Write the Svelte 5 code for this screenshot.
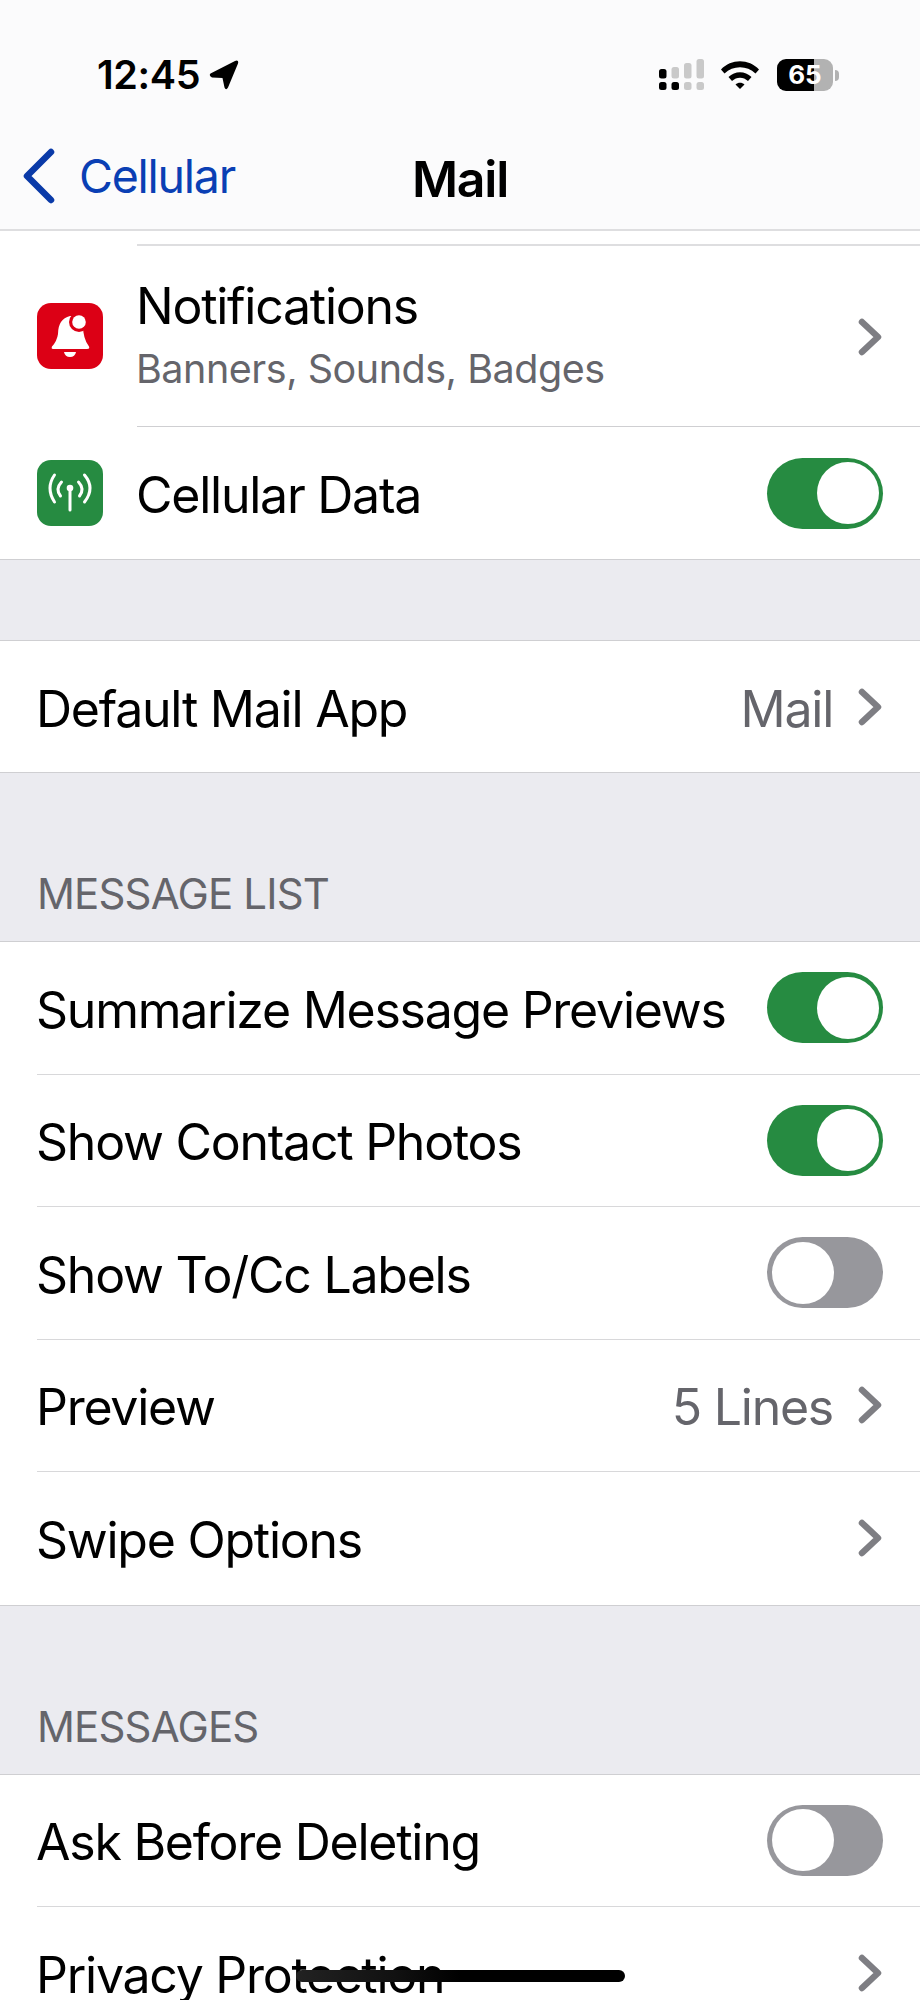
<script>
  const listRows = [
    { label: 'Summarize Message Previews', toggle: true },
    { label: 'Show Contact Photos', toggle: true },
    { label: 'Show To/Cc Labels', toggle: false },
    { label: 'Preview', value: '5 Lines' },
    { label: 'Swipe Options' }
  ];
  const messageRows = [
    { label: 'Ask Before Deleting', toggle: false },
    { label: 'Privacy Protection' }
  ];
</script>

{#snippet chevron()}
  <svg class="chevron" viewBox="0 0 24 38" aria-hidden="true">
    <path d="M4 4 L20 19 L4 34" fill="none" stroke="#7e7e83" stroke-width="6.5" stroke-linecap="round" stroke-linejoin="round" />
  </svg>
{/snippet}

{#snippet toggle(on)}
  <span class="toggle" class:on><span class="knob"></span></span>
{/snippet}

{#snippet row(item)}
  <div class="row">
    <span class="label">{item.label}</span>
    {#if item.value}<span class="value">{item.value}</span>{/if}
    {#if item.toggle !== undefined}
      {@render toggle(item.toggle)}
    {:else}
      {@render chevron()}
    {/if}
  </div>
{/snippet}

<div class="phone">
  <header>
    <div class="status">
      <div class="time">
        <span>12:45</span>
        <svg class="arrow" viewBox="0 0 30 30" aria-hidden="true">
          <path d="M1.500 13.500 L26 1 Q30 -0.500 29 3.500 L19 27.500 Q17 31 15.500 27.500 L13.500 18 L3 17.500 Q-0.500 15.500 1.500 13.500 Z" fill="#000" />
        </svg>
      </div>
      <div class="indicators">
        <svg class="signal" viewBox="0 0 46 32" aria-hidden="true">
          <rect x="0" y="10" width="7.500" height="9.500" rx="2.500" fill="#000" />
          <rect x="0" y="23" width="7.500" height="8" rx="2.500" fill="#000" />
          <rect x="12.500" y="8" width="7.500" height="11.500" rx="2.500" fill="#c9c9c9" />
          <rect x="12.500" y="23" width="7.500" height="8" rx="2.500" fill="#000" />
          <rect x="25" y="4" width="7.500" height="15.500" rx="2.500" fill="#c9c9c9" />
          <rect x="25" y="23" width="7.500" height="8" rx="2.500" fill="#c9c9c9" />
          <rect x="37.500" y="0" width="7.500" height="19.500" rx="2.500" fill="#c9c9c9" />
          <rect x="37.500" y="23" width="7.500" height="8" rx="2.500" fill="#c9c9c9" />
        </svg>
        <svg class="wifi" viewBox="0 0 38 28" aria-hidden="true">
          <path d="M0 8.500 C10 -2.500 28 -2.500 38 8.500 L34.500 12.500 C26 4 12 4 3.500 12.500 Z" fill="#000" />
          <path d="M7.500 16 C14 9.500 24 9.500 30.500 16 L27 20 C22.500 15.500 15.500 15.500 11 20 Z" fill="#000" />
          <path d="M14.500 23.500 C17 21 21 21 23.500 23.500 L19 28 Z" fill="#000" />
        </svg>
        <div class="battery">
          <div class="cell"><span>65</span></div>
          <span class="cap"></span>
        </div>
      </div>
    </div>
    <nav>
      <div class="back">
        <svg viewBox="0 0 34 56" aria-hidden="true">
          <path d="M29 4 L5 28 L29 52" fill="none" stroke="#0a3aa8" stroke-width="6.500" stroke-linecap="round" stroke-linejoin="round" />
        </svg>
        <span>Cellular</span>
      </div>
      <h1>Mail</h1>
    </nav>
  </header>

  <section class="group first">
    <div class="icon-row tall">
      <div class="app-icon red">
        <svg viewBox="0 0 66 66" aria-hidden="true">
          <path d="M16 46 Q14 46 15 43.500 Q20 38 21 31 Q21 16 33 13 Q40 12 46 22 Q46 36 52 43.500 Q53 46 50 46 Z" fill="#fff" />
          <path d="M27 49 H39 Q38 54 33 54 Q28 54 27 49 Z" fill="#fff" />
          <circle cx="42" cy="19" r="10" fill="#dc0015" />
          <circle cx="42" cy="19" r="6.800" fill="#fff" />
        </svg>
      </div>
      <div class="icon-body">
        <div class="titles">
          <div class="label">Notifications</div>
          <div class="sub">Banners, Sounds, Badges</div>
        </div>
        {@render chevron()}
      </div>
    </div>
    <div class="icon-row">
      <div class="app-icon green">
        <svg viewBox="0 0 66 66" aria-hidden="true">
          <g fill="none" stroke="#fff" stroke-width="3" stroke-linecap="round">
            <path d="M17.500 15 Q8.500 28 17.500 42" />
            <path d="M47.500 15 Q58.500 28 47.500 42" />
            <path d="M24.500 22 Q18 29 23.500 36" />
            <path d="M41.500 22 Q48 29 42.500 36" />
            <path d="M33 28 V50" />
          </g>
          <circle cx="33" cy="28" r="3.300" fill="#fff" />
        </svg>
      </div>
      <div class="icon-body">
        <span class="label">Cellular Data</span>
        {@render toggle(true)}
      </div>
    </div>
  </section>

  <section class="group default-app">
    <div class="row">
      <span class="label">Default Mail App</span>
      <span class="value">Mail</span>
      {@render chevron()}
    </div>
  </section>

  <h2>MESSAGE LIST</h2>
  <section class="group">
    {#each listRows as item}
      {@render row(item)}
    {/each}
  </section>

  <h2>MESSAGES</h2>
  <section class="group">
    {#each messageRows as item}
      {@render row(item)}
    {/each}
  </section>

  <div class="home-bar"></div>
</div>

<style>
  .phone {
    position: relative;
    width: 920px;
    height: 2000px;
    overflow: hidden;
    background: #ebebf0;
    color: #000;
    font-family: Inter, "Liberation Sans", sans-serif;
    font-size: 50px;
    line-height: 46px;
    letter-spacing: -0.025em;
  }

  header {
    box-sizing: border-box;
    height: 231px;
    background: #fbfbfc;
    border-bottom: 2px solid #dedee0;
  }

  .status {
    display: flex;
    justify-content: space-between;
    align-items: center;
    height: 112px;
    padding: 38px 81px 0 97px;
    box-sizing: border-box;
  }

  .time {
    display: flex;
    align-items: center;
    gap: 9px;
    font-size: 39.500px;
    font-weight: 600;
    letter-spacing: -0.01em;
  }

  .arrow {
    width: 30px;
    height: 30px;
  }

  .indicators {
    display: flex;
    align-items: center;
  }

  .signal {
    width: 46px;
    height: 32px;
    margin-right: 16px;
  }

  .wifi {
    width: 38px;
    height: 28px;
    margin-right: 18px;
  }

  .battery {
    display: flex;
    align-items: center;
  }

  .cell {
    width: 56px;
    height: 32px;
    border-radius: 9px;
    background: linear-gradient(90deg, #000 66%, #b2b2b2 66%);
    color: #fff;
    font-size: 26px;
    font-weight: 700;
    letter-spacing: 0;
    line-height: 32px;
    text-align: center;
  }

  .cap {
    width: 4px;
    height: 11px;
    margin-left: 2px;
    border-radius: 0 4px 4px 0;
    background: #b2b2b2;
  }

  nav {
    position: relative;
    display: flex;
    justify-content: center;
    align-items: center;
    height: 117px;
  }

  .back {
    position: absolute;
    left: 22px;
    top: 36px;
    display: flex;
    align-items: center;
    gap: 23px;
    color: #0a3fb4;
    font-size: 46.500px;
  }

  .back svg {
    width: 34px;
    height: 56px;
  }

  h1 {
    margin: 17px 0 0;
    font-size: 50px;
    font-weight: 600;
  }

  .group {
    background: #fff;
    border-top: 1px solid #cfcfd2;
    border-bottom: 1px solid #cfcfd2;
  }

  .group.first {
    border-top: none;
    padding-top: 13px;
  }

  .default-app {
    margin-top: 80px;
  }

  .default-app .row {
    height: 131px;
  }

  h2 {
    box-sizing: border-box;
    height: 168px;
    margin: 0;
    padding: 96px 37px 0;
    font-size: 42px;
    font-weight: 400;
    line-height: 50px;
    letter-spacing: -0.02em;
    color: #65656b;
  }

  .row {
    box-sizing: border-box;
    display: flex;
    align-items: center;
    height: 132.500px;
    margin-left: 37px;
    padding-right: 37px;
    border-bottom: 1px solid #d8d8da;
  }

  .row:last-child {
    border-bottom: none;
  }

  .label {
    flex: 1;
    margin-left: -1px;
    padding-top: 4px;
  }

  .value {
    margin-right: 25px;
    padding-top: 4px;
    color: #65656b;
  }

  .chevron {
    display: block;
    flex: none;
    width: 24px;
    height: 38px;
    margin-right: 1px;
  }

  .toggle {
    position: relative;
    flex: none;
    width: 116px;
    height: 71px;
    border-radius: 36px;
    background: #97979c;
  }

  .toggle.on {
    background: #268b41;
  }

  .knob {
    position: absolute;
    top: 4.500px;
    left: 4.500px;
    width: 62px;
    height: 62px;
    border-radius: 50%;
    background: #fff;
  }

  .toggle.on .knob {
    left: 49.500px;
  }

  .icon-row {
    display: flex;
    align-items: center;
    padding-left: 37px;
    height: 132px;
  }

  .icon-row.tall {
    height: 183px;
  }

  .tall .chevron {
    margin-top: 2px;
  }

  .app-icon {
    flex: none;
    width: 66px;
    height: 66px;
    margin-right: 34px;
    border-radius: 14px;
  }

  .app-icon svg {
    display: block;
  }

  .red {
    background: #dc0015;
  }

  .green {
    background: #268b41;
  }

  .icon-body {
    flex: 1;
    display: flex;
    justify-content: space-between;
    align-items: center;
    align-self: stretch;
    padding-right: 37px;
  }

  .icon-body > .label {
    flex: none;
  }

  .tall .icon-body {
    border-top: 2px solid #dedee0;
    border-bottom: 1px solid #cfcfd2;
  }

  .titles {
    padding-bottom: 3px;
  }

  .titles .label {
    padding-top: 0;
    line-height: 58px;
  }

  .sub {
    margin: 11px 0 0 -1px;
    font-size: 39.500px;
    line-height: 46px;
    letter-spacing: -0.012em;
    color: #65656b;
  }

  .home-bar {
    position: absolute;
    left: 296px;
    top: 1970px;
    width: 329px;
    height: 12px;
    border-radius: 6px;
    background: linear-gradient(90deg, #222 0%, #111 30%, #000 50%);
  }
</style>
